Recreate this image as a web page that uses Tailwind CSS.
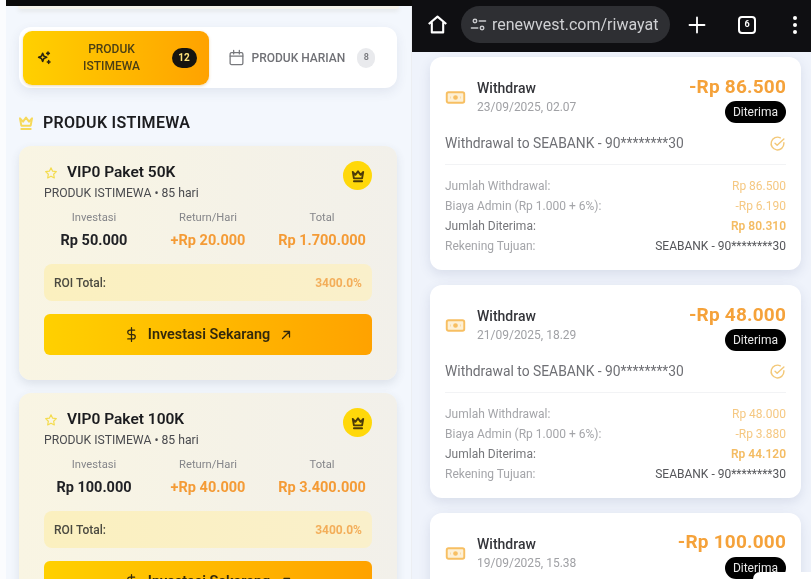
<!DOCTYPE html>
<html lang="en">
<head>
    <meta charset="UTF-8">
    <meta name="viewport" content="width=device-width, initial-scale=1.0">
    <title>Produk / Riwayat</title>
    <script src="https://cdn.jsdelivr.net/npm/@tailwindcss/browser@4"></script>
</head>
<body class="w-[811px] h-[579px] overflow-hidden bg-white font-['Roboto',sans-serif]">
    <div class="flex h-[579px] blur-[0.5px]">

        <!-- Left phone: products -->
        <div class="w-[412px] h-full shrink-0 pl-[6px] bg-[#fbfcfe] overflow-hidden">
            <div class="h-[6px] bg-[#0b0b0b]"></div>
            <div class="h-[573px] bg-[#f3f7fd] border-r border-[#eceef2]">
                <div class="mx-[12px] h-[3px] rounded-b-lg bg-[#f6f3ea] shadow-[0_2px_4px_rgba(120,110,80,0.14)]"></div>

                <!-- Tabs -->
                <div class="ml-[13px] mt-[18px] w-[378px] h-[61px] flex rounded-xl bg-white p-[3.5px] shadow-[0_4px_12px_rgba(40,60,100,0.09)]">
                    <div class="w-[186px] h-[54px] flex items-center rounded-[9px] bg-gradient-to-r from-[#ffd000] to-[#ffa200] pl-[13px] pr-[12px] shadow-[0_1px_3px_rgba(180,120,0,0.3)]">
                        <svg class="w-[16px] h-[16px] text-[#2b2410]" viewBox="0 0 24 24" fill="none" stroke="currentColor" stroke-width="2.4" stroke-linecap="round" stroke-linejoin="round"><path d="M10 5l1.8 4.2L16 11l-4.2 1.8L10 17l-1.8-4.2L4 11l4.2-1.8z"/><path d="M18 3v4M16 5h4M19 16v4M17 18h4"/></svg>
                        <div class="flex-1 text-center text-[12px] leading-[16.5px] font-medium text-[#4b3f14]">PRODUK<br>ISTIMEWA</div>
                        <div class="w-[25px] h-[20px] rounded-full bg-[#16140f] flex items-center justify-center text-[10px] font-bold text-[#ffe27a]">12</div>
                    </div>
                    <div class="flex-1 flex items-center pl-[19px]">
                        <svg class="w-[17px] h-[17px] text-[#77787c]" viewBox="0 0 24 24" fill="none" stroke="currentColor" stroke-width="1.8" stroke-linecap="round" stroke-linejoin="round"><rect x="3" y="5" width="18" height="17" rx="2"/><path d="M8 2v5M16 2v5M3 10h18"/></svg>
                        <span class="ml-[7px] text-[12px] font-medium text-[#707176]">PRODUK HARIAN</span>
                        <div class="ml-[12px] w-[18px] h-[20px] rounded-full bg-[#e9eaed] flex items-center justify-center text-[9px] font-semibold text-[#77787c]">8</div>
                    </div>
                </div>

                <!-- Section title -->
                <div class="ml-[12px] mt-[24px] h-[22px] flex items-center gap-[9px]">
                    <svg class="w-[16px] h-[16px] text-[#f6d95a]" viewBox="0 0 24 24" fill="none" stroke="currentColor" stroke-width="3" stroke-linecap="round" stroke-linejoin="round"><path d="M3 5l4.5 5L12 4l4.5 6L21 5l-2 11H5z"/><path d="M5 21h14"/></svg>
                    <span class="text-[16px] font-semibold text-[#1c1d20] tracking-[0.3px]">PRODUK ISTIMEWA</span>
                </div>

                <!-- Card 1 -->
                <div class="ml-[13px] mt-[12px] w-[378px] h-[234px] rounded-xl bg-gradient-to-r from-[#f9f5e3] to-[#f2f0ea] shadow-[0_4px_10px_rgba(60,70,90,0.12)] px-[25px] pt-[15px]">
                    <div class="flex justify-between">
                        <div>
                            <div class="flex items-center h-[23px]">
                                <svg class="w-[14px] h-[14px] text-[#f4dc4e]" viewBox="0 0 24 24" fill="none" stroke="currentColor" stroke-width="2" stroke-linejoin="round"><path d="M12 3l2.8 5.9 6.4.8-4.7 4.4 1.2 6.4L12 17.4l-5.7 3.1 1.2-6.4-4.7-4.4 6.4-.8z"/></svg>
                                <span class="ml-[9px] text-[15.5px] font-semibold text-[#1b1c1f]">VIP0 Paket 50K</span>
                            </div>
                            <div class="text-[12.2px] leading-[16px] mt-[1px] text-[#4a4b4f]">PRODUK ISTIMEWA • 85 hari</div>
                        </div>
                        <div class="w-[29px] h-[29px] rounded-full bg-[#ffd80a] flex items-center justify-center">
                            <svg class="w-[14px] h-[14px] text-[#4b3b08]" viewBox="0 0 24 24" fill="none" stroke="currentColor" stroke-width="3.2" stroke-linecap="round" stroke-linejoin="round"><path d="M3 5l4.5 5L12 4l4.5 6L21 5l-2 11H5z"/><path d="M5 21h14"/></svg>
                        </div>
                    </div>
                    <div class="mt-[9px] grid grid-cols-3 gap-x-[14px] text-center">
                        <div>
                            <div class="text-[11.2px] leading-[16px] text-[#85868a]">Investasi</div>
                            <div class="mt-[5px] text-[14.5px] leading-[20px] font-bold text-[#212226]">Rp 50.000</div>
                        </div>
                        <div>
                            <div class="text-[11.2px] leading-[16px] text-[#85868a]">Return/Hari</div>
                            <div class="mt-[5px] text-[14.5px] leading-[20px] font-bold text-[#f49b36]">+Rp 20.000</div>
                        </div>
                        <div>
                            <div class="text-[11.2px] leading-[16px] text-[#85868a]">Total</div>
                            <div class="mt-[5px] text-[14.5px] leading-[20px] font-bold text-[#f49b36]">Rp 1.700.000</div>
                        </div>
                    </div>
                    <div class="mt-[13px] h-[37px] rounded-lg bg-gradient-to-r from-[#fbf0bf] to-[#faf0cb] flex items-center justify-between px-[10px]">
                        <span class="text-[12px] font-medium text-[#4b4a40]">ROI Total:</span>
                        <span class="text-[12px] font-bold text-[#f3ae5a]">3400.0%</span>
                    </div>
                    <div class="mt-[13px] h-[41px] rounded-md bg-gradient-to-r from-[#ffd000] to-[#ffa200] flex items-center justify-center">
                        <svg class="w-[15px] h-[15px] text-[#33290c]" viewBox="0 0 24 24" fill="none" stroke="currentColor" stroke-width="2" stroke-linecap="round" stroke-linejoin="round"><path d="M12 1v22"/><path d="M17 5H9.5a3.5 3.5 0 0 0 0 7h5a3.5 3.5 0 0 1 0 7H6"/></svg>
                        <span class="ml-[9px] text-[14.4px] font-semibold text-[#33290c]">Investasi Sekarang</span>
                        <svg class="ml-[10px] w-[12px] h-[12px] text-[#33290c]" viewBox="0 0 24 24" fill="none" stroke="currentColor" stroke-width="2.6" stroke-linecap="round" stroke-linejoin="round"><path d="M5 19L19 5M8 5h11v11"/></svg>
                    </div>
                </div>

                <!-- Card 2 -->
                <div class="ml-[13px] mt-[13px] w-[378px] h-[234px] rounded-xl bg-gradient-to-r from-[#f9f5e3] to-[#f2f0ea] shadow-[0_4px_10px_rgba(60,70,90,0.12)] px-[25px] pt-[15px]">
                    <div class="flex justify-between">
                        <div>
                            <div class="flex items-center h-[23px]">
                                <svg class="w-[14px] h-[14px] text-[#f4dc4e]" viewBox="0 0 24 24" fill="none" stroke="currentColor" stroke-width="2" stroke-linejoin="round"><path d="M12 3l2.8 5.9 6.4.8-4.7 4.4 1.2 6.4L12 17.4l-5.7 3.1 1.2-6.4-4.7-4.4 6.4-.8z"/></svg>
                                <span class="ml-[9px] text-[15.5px] font-semibold text-[#1b1c1f]">VIP0 Paket 100K</span>
                            </div>
                            <div class="text-[12.2px] leading-[16px] mt-[1px] text-[#4a4b4f]">PRODUK ISTIMEWA • 85 hari</div>
                        </div>
                        <div class="w-[29px] h-[29px] rounded-full bg-[#ffd80a] flex items-center justify-center">
                            <svg class="w-[14px] h-[14px] text-[#4b3b08]" viewBox="0 0 24 24" fill="none" stroke="currentColor" stroke-width="3.2" stroke-linecap="round" stroke-linejoin="round"><path d="M3 5l4.5 5L12 4l4.5 6L21 5l-2 11H5z"/><path d="M5 21h14"/></svg>
                        </div>
                    </div>
                    <div class="mt-[9px] grid grid-cols-3 gap-x-[14px] text-center">
                        <div>
                            <div class="text-[11.2px] leading-[16px] text-[#85868a]">Investasi</div>
                            <div class="mt-[5px] text-[14.5px] leading-[20px] font-bold text-[#212226]">Rp 100.000</div>
                        </div>
                        <div>
                            <div class="text-[11.2px] leading-[16px] text-[#85868a]">Return/Hari</div>
                            <div class="mt-[5px] text-[14.5px] leading-[20px] font-bold text-[#f49b36]">+Rp 40.000</div>
                        </div>
                        <div>
                            <div class="text-[11.2px] leading-[16px] text-[#85868a]">Total</div>
                            <div class="mt-[5px] text-[14.5px] leading-[20px] font-bold text-[#f49b36]">Rp 3.400.000</div>
                        </div>
                    </div>
                    <div class="mt-[13px] h-[37px] rounded-lg bg-gradient-to-r from-[#fbf0bf] to-[#faf0cb] flex items-center justify-between px-[10px]">
                        <span class="text-[12px] font-medium text-[#4b4a40]">ROI Total:</span>
                        <span class="text-[12px] font-bold text-[#f3ae5a]">3400.0%</span>
                    </div>
                    <div class="mt-[13px] h-[41px] rounded-md bg-gradient-to-r from-[#ffd000] to-[#ffa200] flex items-center justify-center">
                        <svg class="w-[15px] h-[15px] text-[#33290c]" viewBox="0 0 24 24" fill="none" stroke="currentColor" stroke-width="2" stroke-linecap="round" stroke-linejoin="round"><path d="M12 1v22"/><path d="M17 5H9.5a3.5 3.5 0 0 0 0 7h5a3.5 3.5 0 0 1 0 7H6"/></svg>
                        <span class="ml-[9px] text-[14.4px] font-semibold text-[#33290c]">Investasi Sekarang</span>
                        <svg class="ml-[10px] w-[12px] h-[12px] text-[#33290c]" viewBox="0 0 24 24" fill="none" stroke="currentColor" stroke-width="2.6" stroke-linecap="round" stroke-linejoin="round"><path d="M5 19L19 5M8 5h11v11"/></svg>
                    </div>
                </div>
            </div>
        </div>

        <!-- Right phone: withdraw history -->
        <div class="relative flex-1 h-full bg-[#eff3fb] overflow-hidden">
            <div class="h-[52px] bg-[#0f0f12] flex items-center pl-[15px] pb-[3px]">
                <svg class="w-[21px] h-[21px] text-white" viewBox="0 0 24 24" fill="none" stroke="currentColor" stroke-width="2.4" stroke-linejoin="round"><path d="M2 11.5L12 3l10 8.5M5.5 9.5V21h13V9.5"/></svg>
                <div class="ml-[13px] w-[209px] h-[37px] rounded-full bg-[#2e2f33] flex items-center pl-[9px]">
                    <svg class="w-[17px] h-[17px] text-[#c9cacd]" viewBox="0 0 24 24" fill="none" stroke="currentColor" stroke-width="2" stroke-linecap="round"><circle cx="7" cy="7" r="2.5"/><path d="M13 7h9M2 17h9"/><circle cx="17" cy="17" r="2.5"/></svg>
                    <span class="ml-[5px] text-[16px] text-[#cfd0d3]">renewvest.com/riwayat</span>
                </div>
                <svg class="ml-[17px] w-[20px] h-[20px] text-white" viewBox="0 0 24 24" fill="none" stroke="currentColor" stroke-width="2.2" stroke-linecap="round"><path d="M12 3v18M3 12h18"/></svg>
                <div class="ml-[31px] w-[18px] h-[18px] rounded-[4px] border-2 border-white flex items-center justify-center text-[9px] font-bold text-white">6</div>
                <div class="ml-[37px] flex flex-col gap-[3px]">
                    <div class="w-[4px] h-[4px] rounded-full bg-white"></div>
                    <div class="w-[4px] h-[4px] rounded-full bg-white"></div>
                    <div class="w-[4px] h-[4px] rounded-full bg-white"></div>
                </div>
            </div>

            <!-- Withdraw card 1 -->
            <div class="ml-[18px] mt-[5px] w-[371px] h-[213px] rounded-xl bg-white shadow-[0_4px_12px_rgba(60,80,120,0.13)] px-[15px] pt-[16px]">
                <div class="flex justify-between h-[52px]">
                    <div class="flex items-center h-[48px]">
                        <svg class="w-[21px] h-[21px] text-[#f7bf62]" viewBox="0 0 24 24" fill="none" stroke="currentColor" stroke-width="2.2" stroke-linejoin="round"><rect x="2" y="6" width="20" height="12" rx="2" fill="#fdf0d6"/><circle cx="12" cy="12" r="1.6" fill="currentColor"/><path d="M6 12h.5M17.5 12h.5"/></svg>
                        <div class="ml-[11px]">
                            <div class="text-[14px] leading-[18px] font-medium text-[#34353a]">Withdraw</div>
                            <div class="text-[12px] leading-[18px] mt-[1px] text-[#a0a1a5]">23/09/2025, 02.07</div>
                        </div>
                    </div>
                    <div class="flex flex-col items-end">
                        <div class="mt-[1px] text-[19px] leading-[26px] font-bold text-[#f5a23a] tracking-[0.2px]">-Rp 86.500</div>
                        <div class="mt-[1px] h-[22px] px-[8px] rounded-full bg-black flex items-center text-[12px] text-[#e8e8e8]">Diterima</div>
                    </div>
                </div>
                <div class="mt-[7px] flex items-center justify-between h-[22px]">
                    <span class="text-[13.85px] text-[#6f7075]">Withdrawal to SEABANK - 90********30</span>
                    <svg class="w-[17px] h-[17px] text-[#f3c878]" viewBox="0 0 24 24" fill="none" stroke="currentColor" stroke-width="2" stroke-linecap="round" stroke-linejoin="round"><path d="M21 11v1a9 9 0 1 1-5-8"/><path d="M8.5 11.5l3 3L21 5.5"/></svg>
                </div>
                <div class="mt-[10px] border-t border-[#f2f3f5] pt-[11px] text-[12px] leading-[20px]">
                    <div class="flex justify-between"><span class="text-[#a4a5a9]">Jumlah Withdrawal:</span><span class="text-[#f5c882]">Rp 86.500</span></div>
                    <div class="flex justify-between"><span class="text-[#a4a5a9]">Biaya Admin (Rp 1.000 + 6%):</span><span class="text-[#f5c882]">-Rp 6.190</span></div>
                    <div class="flex justify-between"><span class="text-[#75767a]">Jumlah Diterima:</span><span class="font-semibold text-[#f4bc63]">Rp 80.310</span></div>
                    <div class="flex justify-between"><span class="text-[#a4a5a9]">Rekening Tujuan:</span><span class="text-[#55565a]">SEABANK - 90********30</span></div>
                </div>
            </div>

            <!-- Withdraw card 2 -->
            <div class="ml-[18px] mt-[15px] w-[371px] h-[213px] rounded-xl bg-white shadow-[0_4px_12px_rgba(60,80,120,0.13)] px-[15px] pt-[16px]">
                <div class="flex justify-between h-[52px]">
                    <div class="flex items-center h-[48px]">
                        <svg class="w-[21px] h-[21px] text-[#f7bf62]" viewBox="0 0 24 24" fill="none" stroke="currentColor" stroke-width="2.2" stroke-linejoin="round"><rect x="2" y="6" width="20" height="12" rx="2" fill="#fdf0d6"/><circle cx="12" cy="12" r="1.6" fill="currentColor"/><path d="M6 12h.5M17.5 12h.5"/></svg>
                        <div class="ml-[11px]">
                            <div class="text-[14px] leading-[18px] font-medium text-[#34353a]">Withdraw</div>
                            <div class="text-[12px] leading-[18px] mt-[1px] text-[#a0a1a5]">21/09/2025, 18.29</div>
                        </div>
                    </div>
                    <div class="flex flex-col items-end">
                        <div class="mt-[1px] text-[19px] leading-[26px] font-bold text-[#f5a23a] tracking-[0.2px]">-Rp 48.000</div>
                        <div class="mt-[1px] h-[22px] px-[8px] rounded-full bg-black flex items-center text-[12px] text-[#e8e8e8]">Diterima</div>
                    </div>
                </div>
                <div class="mt-[7px] flex items-center justify-between h-[22px]">
                    <span class="text-[13.85px] text-[#6f7075]">Withdrawal to SEABANK - 90********30</span>
                    <svg class="w-[17px] h-[17px] text-[#f3c878]" viewBox="0 0 24 24" fill="none" stroke="currentColor" stroke-width="2" stroke-linecap="round" stroke-linejoin="round"><path d="M21 11v1a9 9 0 1 1-5-8"/><path d="M8.5 11.5l3 3L21 5.5"/></svg>
                </div>
                <div class="mt-[10px] border-t border-[#f2f3f5] pt-[11px] text-[12px] leading-[20px]">
                    <div class="flex justify-between"><span class="text-[#a4a5a9]">Jumlah Withdrawal:</span><span class="text-[#f5c882]">Rp 48.000</span></div>
                    <div class="flex justify-between"><span class="text-[#a4a5a9]">Biaya Admin (Rp 1.000 + 6%):</span><span class="text-[#f5c882]">-Rp 3.880</span></div>
                    <div class="flex justify-between"><span class="text-[#75767a]">Jumlah Diterima:</span><span class="font-semibold text-[#f4bc63]">Rp 44.120</span></div>
                    <div class="flex justify-between"><span class="text-[#a4a5a9]">Rekening Tujuan:</span><span class="text-[#55565a]">SEABANK - 90********30</span></div>
                </div>
            </div>

            <!-- Withdraw card 3 -->
            <div class="ml-[18px] mt-[15px] w-[371px] h-[213px] rounded-xl bg-white shadow-[0_4px_12px_rgba(60,80,120,0.13)] px-[15px] pt-[16px]">
                <div class="flex justify-between h-[52px]">
                    <div class="flex items-center h-[48px]">
                        <svg class="w-[21px] h-[21px] text-[#f7bf62]" viewBox="0 0 24 24" fill="none" stroke="currentColor" stroke-width="2.2" stroke-linejoin="round"><rect x="2" y="6" width="20" height="12" rx="2" fill="#fdf0d6"/><circle cx="12" cy="12" r="1.6" fill="currentColor"/><path d="M6 12h.5M17.5 12h.5"/></svg>
                        <div class="ml-[11px]">
                            <div class="text-[14px] leading-[18px] font-medium text-[#34353a]">Withdraw</div>
                            <div class="text-[12px] leading-[18px] mt-[1px] text-[#a0a1a5]">19/09/2025, 15.38</div>
                        </div>
                    </div>
                    <div class="flex flex-col items-end">
                        <div class="text-[19px] leading-[26px] font-bold text-[#f5a23a] tracking-[0.2px]">-Rp 100.000</div>
                        <div class="mt-[2px] h-[22px] px-[8px] rounded-full bg-black flex items-center text-[12px] text-[#e8e8e8]">Diterima</div>
                    </div>
                </div>
            </div>

            <!-- Corner overlay at the bottom right -->
            <div class="absolute right-0 bottom-0 w-[58px] h-[7px] rounded-tl-xl bg-white"></div>
        </div>
    </div>
</body>
</html>
